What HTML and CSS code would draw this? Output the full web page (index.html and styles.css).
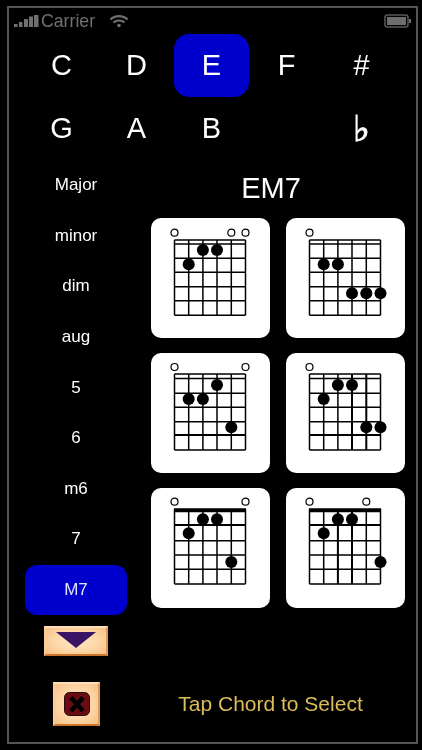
FILE: index.html
```html
<!DOCTYPE html>
<html lang="en">
<head>
<meta charset="utf-8">
<title>Chords</title>
<link rel="stylesheet" href="styles.css">
</head>
<body>
<div class="phone">
  <div class="status">
    <svg class="signal" width="25" height="14" viewBox="0 0 25 14"><rect x="0" y="10" width="3.500" height="3"/><rect x="5" y="8" width="3.500" height="5"/><rect x="10" y="5" width="4" height="8"/><rect x="15" y="2.500" width="4" height="10.500"/><rect x="20" y="1" width="4.500" height="12"/></svg>
    <span class="carrier">Carrier</span>
    <svg class="wifi" width="20" height="14" viewBox="0 0 20 14"><path d="M1.500 5.500C6 1 14 1 18.500 5.500M4.500 8.500C7.500 5.800 12.500 5.800 15.500 8.500"/><circle cx="10" cy="11.500" r="1.800"/></svg>
    <svg class="battery" width="28" height="14" viewBox="0 0 28 14"><rect class="shell" x="1" y="1" width="23" height="12" rx="2.500"/><rect class="fill" x="3" y="3" width="19" height="8"/><rect class="fill" x="25" y="5" width="2" height="4"/></svg>
  </div>

  <div class="keys">
    <div class="key">C</div><div class="key">D</div><div class="key selected">E</div><div class="key">F</div><div class="key">#</div>
    <div class="key">G</div><div class="key">A</div><div class="key">B</div><div class="key"></div><div class="key flat">♭</div>
  </div>

  <div class="main">
    <div class="types">
      <div class="type">Major</div>
      <div class="type">minor</div>
      <div class="type">dim</div>
      <div class="type">aug</div>
      <div class="type">5</div>
      <div class="type">6</div>
      <div class="type">m6</div>
      <div class="type">7</div>
      <div class="type selected">M7</div>
      <div class="down"><svg width="40" height="16" viewBox="0 0 40 16"><path d="M0 0H40L20 16Z"/></svg></div>
    </div>
    <div class="chords">
      <div class="title">EM7</div>
      <div class="cards">
        <div class="card"><svg width="119" height="120" viewBox="0 0 119 120">
          <path class="grid" d="M23.500 22V97.300M37.700 22V97.300M51.900 22V97.300M66 22V97.300M80.300 22V97.300M94.500 22V97.300M23.500 22H94.500M23.500 26H94.500M23.500 40.300H94.500M23.500 54.300H94.500M23.500 68.700H94.500M23.500 82.700H94.500M23.500 97.300H94.500"/>
          <circle class="open" cx="23.500" cy="14.700" r="3.500"/><circle class="open" cx="80.300" cy="14.700" r="3.500"/><circle class="open" cx="94.500" cy="14.700" r="3.500"/>
          <circle cx="51.900" cy="32" r="6"/><circle cx="66" cy="32" r="6"/><circle cx="37.700" cy="46.300" r="6"/>
        </svg></div>
        <div class="card"><svg width="119" height="120" viewBox="0 0 119 120">
          <path class="grid" d="M23.500 22V97.300M37.700 22V97.300M51.900 22V97.300M66 22V97.300M80.300 22V97.300M94.500 22V97.300M23.500 22H94.500M23.500 26H94.500M23.500 40.300H94.500M23.500 54.300H94.500M23.500 68.700H94.500M23.500 82.700H94.500M23.500 97.300H94.500"/>
          <circle class="open" cx="23.500" cy="14.700" r="3.500"/>
          <circle cx="37.700" cy="46.300" r="6"/><circle cx="51.900" cy="46.300" r="6"/><circle cx="66" cy="75.300" r="6"/><circle cx="80.300" cy="75.300" r="6"/><circle cx="94.500" cy="75.300" r="6"/>
        </svg></div>
        <div class="card"><svg width="119" height="120" viewBox="0 0 119 120">
          <path class="grid" d="M23.500 21V97M37.700 21V97M51.900 21V97M66 21V97M80.300 21V97M94.500 21V97M23.500 21H94.500M23.500 25.500H94.500M23.500 40.300H94.500M23.500 54.300H94.500M23.500 68.700H94.500M23.500 97H94.500"/>
          <path class="bold" d="M23.500 82H94.500"/>
          <circle class="open" cx="23.500" cy="14" r="3.500"/><circle class="open" cx="94.500" cy="14" r="3.500"/>
          <circle cx="66" cy="32" r="6"/><circle cx="37.700" cy="46" r="6"/><circle cx="51.900" cy="46" r="6"/><circle cx="80.300" cy="74.300" r="6"/>
        </svg></div>
        <div class="card"><svg width="119" height="120" viewBox="0 0 119 120">
          <path class="grid" d="M23.500 21V97M37.700 21V97M51.900 21V97M94.500 21V97M23.500 21H94.500M23.500 25.500H94.500M23.500 40.300H94.500M23.500 54.300H94.500M23.500 68.700H94.500M23.500 97H94.500"/>
          <path class="bold" d="M66 21V97M80.300 21V97M23.500 82H94.500"/>
          <circle class="open" cx="23.500" cy="14" r="3.500"/>
          <circle cx="51.900" cy="32" r="6"/><circle cx="66" cy="32" r="6"/><circle cx="37.700" cy="46" r="6"/><circle cx="80.300" cy="74.300" r="6"/><circle cx="94.500" cy="74.300" r="6"/>
        </svg></div>
        <div class="card"><svg width="119" height="120" viewBox="0 0 119 120">
          <path class="grid" d="M23.500 21V96M37.700 21V96M51.900 21V96M66 21V96M80.300 21V96M94.500 21V96M23.500 52.700H94.500M23.500 67H94.500M23.500 81.300H94.500M23.500 96H94.500"/>
          <path class="nut" d="M23 22.300H95"/><path class="bold" d="M23.500 37H94.500"/>
          <circle class="open" cx="23.500" cy="13.700" r="3.500"/><circle class="open" cx="94.500" cy="13.700" r="3.500"/>
          <circle cx="51.900" cy="31.300" r="6"/><circle cx="66" cy="31.300" r="6"/><circle cx="37.700" cy="45.300" r="6"/><circle cx="80.300" cy="74" r="6"/>
        </svg></div>
        <div class="card"><svg width="119" height="120" viewBox="0 0 119 120">
          <path class="grid" d="M23.500 21V96M37.700 21V96M80.300 21V96M94.500 21V96M23.500 52.700H94.500M23.500 67H94.500M23.500 81.300H94.500M23.500 96H94.500"/>
          <path class="bold" d="M51.900 21V96M66 21V96M23.500 37H94.500"/>
          <path class="nut" d="M23 22.300H95"/>
          <circle class="open" cx="23.500" cy="13.700" r="3.500"/><circle class="open" cx="80.300" cy="13.700" r="3.500"/>
          <circle cx="51.900" cy="31.300" r="6"/><circle cx="66" cy="31.300" r="6"/><circle cx="37.700" cy="45.300" r="6"/><circle cx="94.500" cy="74" r="6"/>
        </svg></div>
      </div>
    </div>
  </div>

  <div class="footer">
    <div class="close"><svg width="26" height="24" viewBox="0 0 26 24"><rect class="close-bg" x="0.500" y="0.500" width="25" height="23" rx="5"/><path class="close-x" d="M7 5.500L19 19M19 5.500L7 19"/></svg></div>
    <div class="hint">Tap Chord to Select</div>
  </div>
</div>
</body>
</html>
```
FILE: styles.css
```css
* { box-sizing: border-box; }
html, body { margin: 0; background: #000; }
body { width: 422px; height: 750px; overflow: hidden; font-family: "Liberation Sans", Arial, sans-serif; color: #fff; }

.phone {
  width: 411px; height: 738px; margin: 6px 0 0 7px;
  border: 2px solid #555;
  display: flex; flex-direction: column;
  filter: blur(0.4px);
}

.status { height: 26px; display: flex; align-items: center; padding: 0 4px 0 5px; color: #707070; }
.signal { fill: #707070; margin-right: 2px; }
.carrier { font-size: 17.7px; line-height: 26px; }
.wifi { margin-left: 14px; }
.wifi path { fill: none; stroke: #707070; stroke-width: 2.2; }
.wifi circle { fill: #707070; }
.battery { margin-left: auto; }
.battery .shell { fill: none; stroke: #5a5a5a; stroke-width: 1.500; }
.battery .fill { fill: #6e6e6e; }

.keys { display: grid; grid-template-columns: repeat(5, 75px); grid-template-rows: 63px 63px; margin-left: 15px; }
.key { display: flex; align-items: center; justify-content: center; font-size: 29px; border-radius: 15px; }
.key.selected { background: #0000cc; }
.flat { font-family: "DejaVu Sans", sans-serif; font-size: 36px; -webkit-text-stroke: 1px #fff; }

.main { display: flex; gap: 24px; padding-left: 16px; }
.types { width: 102px; }
.type { height: 50.6px; display: flex; align-items: center; justify-content: center; font-size: 17px; border-radius: 12px; }
.type.selected { background: #0000cc; color: #e0e0ff; }

.down, .close {
  display: flex; align-items: center; justify-content: center;
  background: radial-gradient(ellipse at center, #ffe8cc 0%, #fcd4a2 60%, #f8bf88 100%);
  border-top: 2px solid #fde0b8; border-left: 2px solid #f9cc98;
  border-right: 2px solid #e09a58; border-bottom: 2px solid #c8742c;
}
.down { width: 64px; height: 30px; margin: 11px 0 0 19px; padding-bottom: 2px; }
.down path { fill: #3a1464; }

.chords { width: 254px; }
.title { height: 58px; display: flex; align-items: center; justify-content: center; font-size: 29px; padding: 0 14px 2px 0; }
.cards { display: grid; grid-template-columns: 119px 119px; grid-auto-rows: 120px; column-gap: 16px; row-gap: 15px; }
.card { background: #fff; border-radius: 10px; }
.card svg { display: block; }
.card circle { fill: #000; }
.card .open { fill: #fff; stroke: #000; stroke-width: 1.200; }
.grid { fill: none; stroke: #000; stroke-width: 1.500; }
.bold { fill: none; stroke: #000; stroke-width: 2; }
.nut { fill: none; stroke: #000; stroke-width: 4; }

.footer { display: flex; align-items: center; padding: 26px 0 0 44px; }
.close { width: 47px; height: 44px; flex: none; }
.close-bg { fill: #6a0c12; stroke: #30060a; }
.close-x { fill: none; stroke: #000; stroke-width: 4.500; }
.hint { margin-left: 51px; width: 254px; padding-right: 15px; text-align: center; font-size: 21px; color: #dcbc58; }
```
